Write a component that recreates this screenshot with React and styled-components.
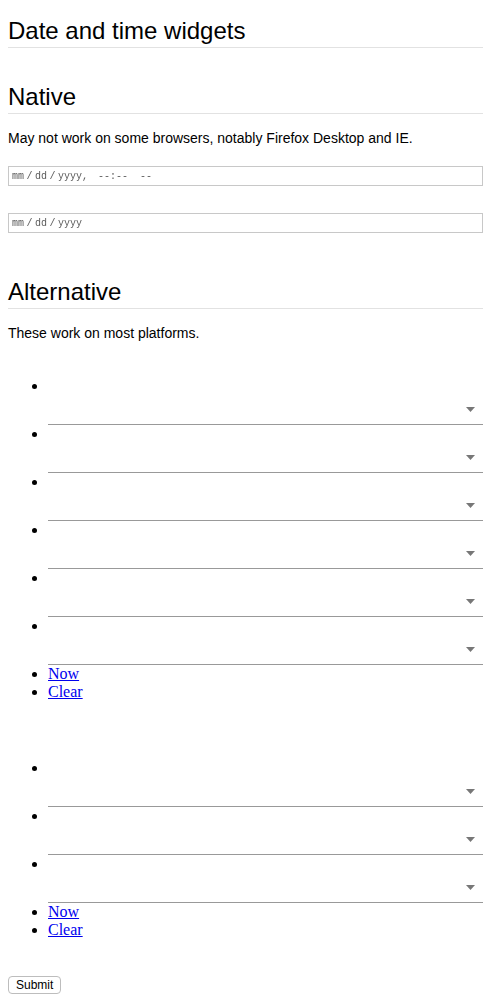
import React from 'react';
import styled, { createGlobalStyle } from 'styled-components';

const GlobalStyle = createGlobalStyle`
  body {
    margin: 0;
    background: #fff;
    color: #000;
  }
`;

const Page = styled.form`
  padding: 16px 8px 8px;
  font-family: 'Liberation Sans', Arial, sans-serif;
`;

const Title = styled.h1`
  margin: 0;
  font-size: 24px;
  font-weight: normal;
  line-height: 29px;
  padding-bottom: 2px;
  border-bottom: 1px solid #e2e2e2;
`;

const Section = styled.h2`
  margin: ${(props) => props.top}px 0 0;
  font-size: 24px;
  font-weight: normal;
  line-height: 29px;
  padding-bottom: 2px;
  border-bottom: 1px solid #e2e2e2;
`;

const Note = styled.p`
  margin: ${(props) => props.top}px 0 0;
  font-size: 14px;
  line-height: 17px;
`;

const Field = styled.div`
  margin-top: ${(props) => props.top}px;
  height: 18px;
  border: 1px solid #c8c8c8;
  padding: 0 3px;
  display: flex;
  align-items: center;
  font-family: 'Liberation Mono', 'Courier New', monospace;
  font-size: 10px;
  color: #5a5a5a;
  white-space: pre;
  word-spacing: -3.5px;
  will-change: transform;
`;

const Part = styled.span`
  margin-left: ${(props) => props.gap || 0}px;
`;

const List = styled.ul`
  margin: ${(props) => props.top}px 0 0;
  padding-left: 40px;
  font-family: 'Liberation Serif', 'Times New Roman', serif;
  font-size: 16px;
  line-height: 18px;
`;

const Item = styled.li``;

const Blank = styled.div`
  height: 18px;
`;

const Picker = styled.div`
  height: 29px;
  border-bottom: 1px solid #999;
  display: flex;
  justify-content: flex-end;
  align-items: flex-start;

  svg {
    margin-top: 12px;
    margin-right: 8px;
  }
`;

const Link = styled.a`
  color: #0000ee;
  text-decoration: underline;
`;

const Submit = styled.button`
  margin-top: 37px;
  font-family: 'Liberation Sans', Arial, sans-serif;
  font-size: 12px;
  line-height: 14px;
  padding: 1px 7px;
  background: #fff;
  color: #000;
  border: 1px solid #bdbdbd;
  border-radius: 4px;
`;

const Arrow = () => (
  <svg width="9" height="5" viewBox="0 0 9 5">
    <path d="M0 0 H9 L4.5 5 Z" fill="#777" />
  </svg>
);

const PickerItem = () => (
  <Item>
    <Blank>&nbsp;</Blank>
    <Picker>
      <Arrow />
    </Picker>
  </Item>
);

const Actions = () => (
  <>
    <Item>
      <Link href="#">Now</Link>
    </Item>
    <Item>
      <Link href="#">Clear</Link>
    </Item>
  </>
);

export default function App() {
  return (
    <>
      <GlobalStyle />
      <Page onSubmit={(e) => e.preventDefault()}>
        <Title>Date and time widgets</Title>

        <Section top={34}>Native</Section>
        <Note top={16}>
          May not work on some browsers, notably Firefox Desktop and IE.
        </Note>
        <Field top={19}>
          <Part>mm / dd / yyyy,</Part>
          <Part gap={10}>--:--</Part>
          <Part gap={12}>--</Part>
        </Field>
        <Field top={27}>
          <Part>mm / dd / yyyy</Part>
        </Field>

        <Section top={44}>Alternative</Section>
        <Note top={16}>These work on most platforms.</Note>

        <List top={35}>
          {[0, 1, 2, 3, 4, 5].map((i) => (
            <PickerItem key={i} />
          ))}
          <Actions />
        </List>

        <List top={58}>
          {[0, 1, 2].map((i) => (
            <PickerItem key={i} />
          ))}
          <Actions />
        </List>

        <Submit type="submit">Submit</Submit>
      </Page>
    </>
  );
}
